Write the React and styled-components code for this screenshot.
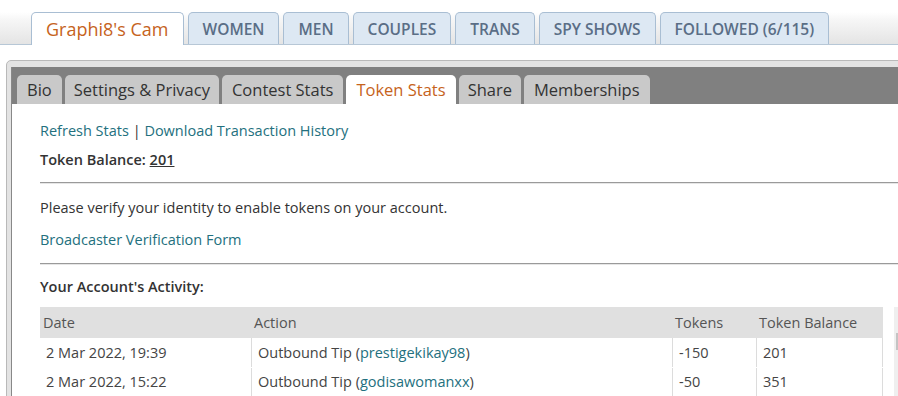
import React from 'react'
import styled, { createGlobalStyle } from 'styled-components';

const Global = createGlobalStyle`
    body {
        margin: 0;
        background: #fff;
        font-family: "Open Sans", "DejaVu Sans", sans-serif;
        overflow: hidden;
    }
`;

const Page = styled.div`
    width: 898px;
    height: 396px;
    overflow: hidden;
`;

const TopNav = styled.div`
    display: flex;
    align-items: flex-end;
    gap: 4px;
    height: 44px;
    padding-left: 31px;
    border-bottom: 1px solid #b7c7d6;
    background: linear-gradient(to bottom, #fff 0, #fff 12px, #f6f6f6 20px, #e4e4e4 44px);
`;

const NavTab = styled.div`
    display: flex;
    align-items: center;
    padding: 0 ${p => p.$active ? 14 : 14}px;
    border: 1px solid #a9bed3;
    border-bottom: none;
    border-radius: 5px 5px 0 0;
    margin-bottom: ${p => p.$active ? '-1px' : '0'};
    height: ${p => p.$active ? '32px' : '31px'};
    background: ${p => p.$active ? '#fff' : '#dde8f3'};
    color: ${p => p.$active ? '#c6631c' : '#5a6e86'};
    font-size: ${p => p.$active ? '18px' : '15.5px'};
    font-weight: ${p => p.$active ? 500 : 600};
    white-space: nowrap;
`;

const Frame = styled.div`
    margin: 15px 0 0 6px;
    width: 1000px;
    border: 1px solid #b9b9b9;
    border-radius: 5px 0 0 0;
    background: #e3e3e3;
    padding: 6px 0 0 4px;
`;

const Panel = styled.div`
    background: #fff;
    border-left: 1px solid #888;
`;

const TabStrip = styled.div`
    display: flex;
    align-items: flex-end;
    gap: 3px;
    height: 37px;
    padding-left: 5px;
    background: #808080;
`;

const SubTab = styled.div`
    height: 29px;
    display: flex;
    align-items: center;
    padding: 0 ${p => p.$pad || 9}px;
    border-radius: 5px 5px 0 0;
    background: ${p => p.$active ? '#fff' : '#c9c9c9'};
    color: ${p => p.$active ? '#c6631c' : '#333'};
    font-size: 16.5px;
    white-space: nowrap;
`;

const Content = styled.div`
    padding: 17px 0 0 28px;
    font-size: 14.5px;
    line-height: 20px;
    color: #333;
`;

const Line = styled.div`
    margin-top: ${p => p.$mt || 0}px;
    font-weight: ${p => p.$bold ? 600 : 400};
    white-space: nowrap;
`;

const Link = styled.a`
    color: #23707e;
    text-decoration: none;
`;

const Amount = styled.span`
    text-decoration: underline;
`;

const Rule = styled.div`
    margin-top: ${p => p.$mt}px;
    height: 1px;
    background: #9a9a9a;
    box-shadow: 0 1px 0 #e6e6e6;
`;

const TableRow = styled.div`
    display: flex;
    gap: 11px;
    margin-top: 10px;
`;

const Table = styled.div`
    width: 843px;
    display: grid;
    grid-template-columns: 211px 421px 84px 127px;
`;

const HeadCell = styled.div`
    height: 31px;
    display: flex;
    align-items: center;
    padding-left: 3px;
    background: #e0e0e0;
    color: #555;
`;

const Cell = styled.div`
    height: 29px;
    display: flex;
    align-items: center;
    padding-left: 6px;
    background: #fff;
    color: #444;
    border-left: ${p => p.$first ? 'none' : '1px solid #dcdcdc'};
    border-right: ${p => p.$last ? '1px solid #dcdcdc' : 'none'};
    white-space: nowrap;
`;

const SideBox = styled.div`
    width: 60px;
    height: 90px;
    background: #efefef;
    padding-top: 26px;
    box-sizing: border-box;
`;

const Thumb = styled.div`
    width: 3px;
    height: 17px;
    margin-left: 2px;
    background: #c4c4c4;
`;

const navTabs = ['WOMEN', 'MEN', 'COUPLES', 'TRANS', 'SPY SHOWS', 'FOLLOWED (6/115)'];

const subTabs = [
    { label: 'Bio', pad: 10 },
    { label: 'Settings & Privacy', pad: 9 },
    { label: 'Contest Stats', pad: 10 },
    { label: 'Token Stats', pad: 10, active: true },
    { label: 'Share', pad: 9 },
    { label: 'Memberships', pad: 10 },
];

const rows = [
    { date: '2 Mar 2022, 19:39', user: 'prestigekikay98', tokens: '-150', balance: '201' },
    { date: '2 Mar 2022, 15:22', user: 'godisawomanxx', tokens: '-50', balance: '351' },
];

const App = () => {
    return (
        <Page>
            <Global />
            <TopNav>
                <NavTab $active>Graphi8's Cam</NavTab>
                {navTabs.map(t => <NavTab key={t}>{t}</NavTab>)}
            </TopNav>
            <Frame>
                <Panel>
                    <TabStrip>
                        {subTabs.map(t => (
                            <SubTab key={t.label} $pad={t.pad} $active={t.active}>{t.label}</SubTab>
                        ))}
                    </TabStrip>
                    <Content>
                        <Line>
                            <Link href="#">Refresh Stats</Link> | <Link href="#">Download Transaction History</Link>
                        </Line>
                        <Line $mt={9} $bold>Token Balance: <Amount>201</Amount></Line>
                        <Rule $mt={12} />
                        <Line $mt={15}>Please verify your identity to enable tokens on your account.</Line>
                        <Line $mt={12}><Link href="#">Broadcaster Verification Form</Link></Line>
                        <Rule $mt={13} />
                        <Line $mt={13} $bold>Your Account's Activity:</Line>
                        <TableRow>
                            <Table>
                                <HeadCell>Date</HeadCell>
                                <HeadCell>Action</HeadCell>
                                <HeadCell>Tokens</HeadCell>
                                <HeadCell>Token Balance</HeadCell>
                                {rows.map(r => (
                                    <React.Fragment key={r.date}>
                                        <Cell $first>{r.date}</Cell>
                                        <Cell>Outbound Tip (<Link href="#">{r.user}</Link>)</Cell>
                                        <Cell>{r.tokens}</Cell>
                                        <Cell $last>{r.balance}</Cell>
                                    </React.Fragment>
                                ))}
                            </Table>
                            <SideBox><Thumb /></SideBox>
                        </TableRow>
                    </Content>
                </Panel>
            </Frame>
        </Page>
    );
};

export default App
